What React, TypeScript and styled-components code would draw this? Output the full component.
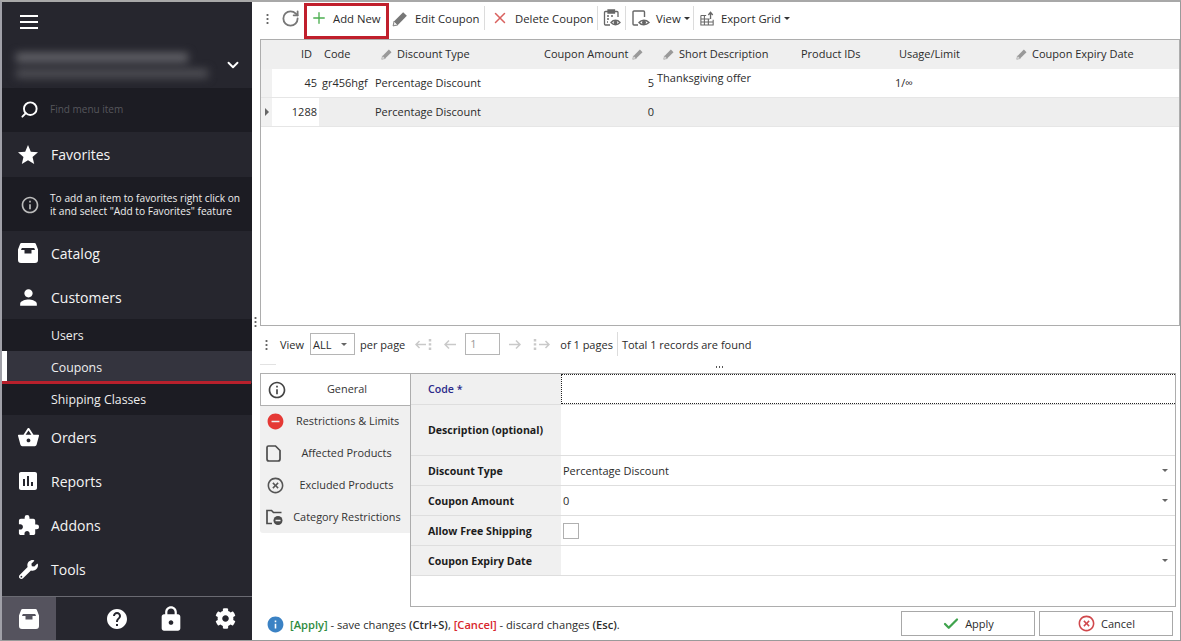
import React from 'react';
import styled, { createGlobalStyle } from 'styled-components';
import { ChevronDown, Search, Plus, X, RotateCw, Check } from 'lucide-react';
import { MdStar, MdInfoOutline, MdPerson, MdAssessment, MdExtension, MdShoppingBasket, MdHelp, MdLock, MdInfo, MdRemoveCircle, MdHighlightOff } from 'react-icons/md';
import { FaWrench, FaCog } from 'react-icons/fa';

const Global = createGlobalStyle`
    html, body { margin: 0; padding: 0; background: #fff; overflow: hidden; }
    * { box-sizing: border-box; }
    body { font-family: "Open Sans", "Liberation Sans", sans-serif; font-size: 11px; color: #2b2b2b; }
`;

const Frame = styled.div`
    width: 1181px;
    height: 641px;
    display: flex;
    border-top: 2px solid #a8a8a8;
    border-left: 2px solid #a0a0a8;
    border-right: 1px solid #9a9a9a;
    border-bottom: 1px solid #9a9a9a;
`;

/* ---------- sidebar ---------- */
const Sidebar = styled.aside`
    width: 250px;
    flex: none;
    height: 100%;
    background: #26262e;
    color: #f2f2f2;
    display: flex;
    flex-direction: column;
    position: relative;
`;
const Burger = styled.div`
    height: 46px;
    padding: 13px 0 0 18px;
    span { display: block; width: 18px; height: 2px; background: #fff; margin-bottom: 4px; }
`;
const Account = styled.div`
    height: 40px;
    display: flex;
    align-items: center;
    justify-content: space-between;
    padding: 0 10px 6px 14px;
`;
const BlurLines = styled.div`
    display: flex;
    flex-direction: column;
    gap: 7px;
    filter: blur(4.5px);
    i { display: block; height: 9px; background: #66666c; }
    i:first-child { width: 172px; }
    i:last-child { width: 192px; background: #505056; }
`;
const SearchRow = styled.div`
    height: 44px;
    background: #1c1c23;
    display: flex;
    align-items: center;
    padding: 0 0 2px 18px;
    gap: 11px;
    font-size: 10px;
    color: #56565c;
    svg { transform: scaleX(-1); color: #fff; }
`;
const MenuItem = styled.div<{ $h?: number }>`
    height: ${p => p.$h || 44}px;
    display: flex;
    align-items: center;
    padding-left: 16px;
    gap: 13px;
    font-size: 14px;
    color: #f4f4f4;
    svg { flex: none; }
`;
const IconSlot = styled.span`
    width: 20px;
    height: 20px;
    display: flex;
    align-items: center;
    justify-content: center;
    flex: none;
`;
const Hint = styled.div`
    height: 54px;
    background: #1c1c23;
    display: flex;
    align-items: center;
    padding: 1px 0 0 18px;
    gap: 10px;
    font-size: 10.2px;
    line-height: 13px;
    color: #eee;
    svg { color: #bbb; flex: none; }
`;
const SubList = styled.div`
    background: #1c1c23;
`;
const SubItem = styled.div<{ $active?: boolean }>`
    height: 32px;
    display: flex;
    align-items: center;
    padding-left: ${p => (p.$active ? 44 : 49)}px;
    font-size: 12.3px;
    color: #eee;
    position: relative;
    background: ${p => (p.$active ? '#34343e' : 'transparent')};
    border-left: ${p => (p.$active ? '5px solid #fff' : '0')};
`;
const RedLine = styled.span`
    position: absolute;
    left: -5px;
    right: 1px;
    bottom: -1px;
    height: 3px;
    background: #b8202c;
`;
const SideFooter = styled.div`
    margin-top: auto;
    height: 44px;
    border-top: 1px solid #6a6a72;
    display: flex;
    align-items: center;
`;
const FooterActive = styled.div`
    width: 54px;
    height: 100%;
    background: #55535e;
    display: flex;
    align-items: center;
    justify-content: center;
    margin-right: 34px;
`;
const FooterBtn = styled.div`
    width: 54px;
    display: flex;
    justify-content: center;
    color: #fff;
`;

/* ---------- main ---------- */
const Main = styled.main`
    flex: 1;
    min-width: 0;
    display: flex;
    flex-direction: column;
    position: relative;
`;
const Toolbar = styled.div`
    height: 37px;
    display: flex;
    align-items: center;
    padding: 0 0 5px 14px;
    font-size: 11.3px;
    color: #2b2b2b;
`;
const Grip = styled.span<{ $mr?: number }>`
    width: 3px;
    height: 11px;
    flex: none;
    margin-right: ${p => p.$mr || 0}px;
    background: radial-gradient(circle, #666 1px, transparent 1.2px) 0 0 / 3px 4px repeat-y;
`;
const SplitterGrip = styled(Grip)`
    position: absolute;
    left: 2px;
    top: 314px;
`;
const ToolBtn = styled.div<{ $w: number; $pl: number }>`
    width: ${p => p.$w}px;
    height: 100%;
    flex: none;
    display: flex;
    align-items: center;
    gap: 6px;
    padding-left: ${p => p.$pl}px;
    white-space: nowrap;
`;
const AddBtn = styled.div`
    width: 85px;
    height: 36px;
    margin-top: 1px;
    flex: none;
    align-self: flex-start;
    display: flex;
    align-items: center;
    gap: 5px;
    padding: 0 0 6px 3px;
    border: 3px solid #c01f2c;
    white-space: nowrap;
`;
const Sep = styled.span<{ $mx?: number }>`
    width: 1px;
    height: 24px;
    flex: none;
    margin: 0 ${p => p.$mx || 0}px;
    background: #dcdcdc;
`;
const Caret = styled.span`
    width: 0;
    height: 0;
    flex: none;
    margin-left: -3px;
    border-left: 3px solid transparent;
    border-right: 3px solid transparent;
    border-top: 3px solid #333;
`;
const GridBox = styled.section`
    margin-left: 8px;
    height: 287px;
    flex: none;
    border: 1px solid #adadad;
    background: #fff;
`;
const cols = '11px 47px 53px 168px 116px 139px 98px 117px 1fr';
const HeadRow = styled.div`
    height: 29px;
    display: grid;
    grid-template-columns: ${cols};
    background: #efefef;
    align-items: center;
    padding-bottom: 2px;
`;
const HeadCell = styled.div<{ $x?: number }>`
    display: flex;
    align-items: center;
    gap: 4px;
    white-space: nowrap;
    padding-left: ${p => p.$x || 0}px;
`;
const Row = styled.div<{ $alt?: boolean }>`
    height: 29px;
    display: grid;
    grid-template-columns: ${cols};
    align-items: center;
    background: ${p => (p.$alt ? '#eeeeee' : '#fff')};
    border-bottom: 1px solid #e6e6e6;
`;
const Indicator = styled.div`
    height: 100%;
    background: #f1f1f1;
    display: flex;
    align-items: center;
    padding-left: 4px;
`;
const RightArrow = styled.span`
    width: 0;
    height: 0;
    border-top: 4px solid transparent;
    border-bottom: 4px solid transparent;
    border-left: 4px solid #666;
`;
const Cell = styled.div<{ $right?: boolean; $white?: boolean; $up?: boolean; $pad?: number }>`
    height: 100%;
    display: flex;
    align-items: ${p => (p.$up ? 'flex-start' : 'center')};
    justify-content: ${p => (p.$right ? 'flex-end' : 'flex-start')};
    padding: ${p => (p.$up ? '1px' : '0')} ${p => (p.$right ? '2px' : '0')} ${p => (p.$up ? '0' : '2px')} ${p => p.$pad || 0}px;
    white-space: nowrap;
    background: ${p => (p.$white ? '#fff' : 'transparent')};
`;
const Pager = styled.div`
    height: 38px;
    padding: 0 0 2px 13px;
    display: flex;
    align-items: center;
    white-space: nowrap;
    position: relative;
`;
const SelectBox = styled.div`
    width: 45px;
    height: 22px;
    margin: 0 5px 0 6px;
    border: 1px solid #b5b5b5;
    display: flex;
    align-items: center;
    justify-content: space-between;
    padding: 0 7px 0 2px;
`;
const SmallCaret = styled.span`
    width: 0;
    height: 0;
    border-left: 3px solid transparent;
    border-right: 3px solid transparent;
    border-top: 3px solid #666;
`;
const PageInput = styled.div`
    width: 35px;
    height: 22px;
    border: 1px solid #b5b5b5;
    padding: 2px 0 0 4px;
    color: #999;
    margin: 0 8px 0 8px;
`;
const PagerIcon = styled.span<{ $w: number; $ml: number }>`
    width: ${p => p.$w}px;
    margin-left: ${p => p.$ml}px;
    flex: none;
    display: flex;
    align-items: center;
    justify-content: center;
`;
const PagesLabel = styled.span`
    margin-left: 10px;
`;
const DotsHandle = styled.div`
    height: 9px;
    display: flex;
    justify-content: center;
    align-items: flex-start;
    padding: 2px 0 0 6px;
    position: relative;
    span { width: 9px; height: 2px; background: radial-gradient(circle, #555 1px, transparent 1.1px) 0 0 / 3px 2px repeat-x; }
    &::before { content: ''; position: absolute; left: 8px; top: 0; width: 16px; height: 1px; background: #e2e2e2; }
`;
const Editor = styled.div`
    display: flex;
    flex: none;
    margin-left: 8px;
`;
const Tabs = styled.nav`
    width: 150px;
    height: 160px;
    flex: none;
    background: #f0f0f0;
    border-radius: 0 0 0 3px;
    display: flex;
    flex-direction: column;
`;
const Tab = styled.div<{ $active?: boolean; $narrow?: boolean }>`
    height: ${p => (p.$active ? 33 : 32)}px;
    flex: none;
    display: grid;
    grid-template-columns: ${p => (p.$narrow ? '25px' : '30px')} 1fr;
    align-items: center;
    padding: 0 ${p => (p.$narrow ? 7 : 13)}px 0 6px;
    font-size: 10.9px;
    white-space: nowrap;
    text-align: center;
    color: #333;
    span { position: relative; top: -1px; }
    ${p => (p.$active ? 'background:#fff;border:1px solid #b0b0b0;border-right:0;margin-bottom:-1px;' : '')}
`;
const FormPanel = styled.div`
    width: 766px;
    height: 234px;
    border: 1px solid #adadad;
    flex: none;
    background: #fff;
`;
const FormRow = styled.div<{ $h?: number }>`
    height: ${p => p.$h || 30}px;
    display: grid;
    grid-template-columns: 150px 1fr;
    border-bottom: 1px solid #dedede;
`;
const FormLabel = styled.div<{ $code?: boolean }>`
    background: #f0f0f0;
    display: flex;
    align-items: center;
    padding-left: 17px;
    font-weight: ${p => (p.$code ? 600 : 700)};
    font-size: 10.6px;
    color: ${p => (p.$code ? '#2b2a8a' : '#1c1c1c')};
`;
const FormValue = styled.div<{ $focus?: boolean }>`
    display: flex;
    align-items: center;
    justify-content: space-between;
    padding: 0 7px 0 2px;
    ${p => (p.$focus ? 'border: 1px dotted #222; border-right: 0;' : '')}
`;
const CheckBox = styled.span`
    width: 16px;
    height: 16px;
    border: 1px solid #b0b0b0;
`;
const Bottom = styled.div`
    flex: 1;
    display: flex;
    align-items: center;
    padding: 0 7px 0 14px;
    font-size: 11.15px;
`;
const Message = styled.div`
    display: flex;
    align-items: center;
    gap: 5px;
    padding-top: 2px;
    white-space: pre;
    b { font-weight: 600; }
    .ok { color: #2e8b3d; font-weight: 600; }
    .no { color: #d8262c; font-weight: 600; }
`;
const Buttons = styled.div`
    margin-left: auto;
    display: flex;
    gap: 4px;
`;
const Button = styled.div`
    width: 134px;
    height: 25px;
    border: 1px solid #a8a8a8;
    display: flex;
    align-items: center;
    justify-content: center;
    gap: 5px;
    font-size: 11px;
`;

const Archive = ({ size = 20 }: { size?: number }) => (
    <svg width={size} height={size} viewBox="0 0 20 20" fill="#fff">
        <path fillRule="evenodd" d="M3.500 0h13a1.500 1.500 0 0 1 1.400 1L20 6.500V17a3 3 0 0 1-3 3H3a3 3 0 0 1-3-3V6.500L2.100 1a1.500 1.500 0 0 1 1.400-1zM3.800 5 3 7h3.500v3.500h7V7H17l-.800-2z" />
    </svg>
);

const Pencil = ({ size = 12, c = '#999' }: { size?: number; c?: string }) => (
    <svg width={size} height={size} viewBox="0 0 16 16">
        <path d="M1 15l1-4.500L10.500 2l3.500 3.500L5.500 14z" fill={c} />
        <path d="M1 15l1-4.500 3.500 3.500z" fill="#eee" stroke={c} strokeWidth=".8" />
    </svg>
);

const ClipboardEye = () => (
    <svg width="18" height="18" viewBox="0 0 18 18" fill="none" stroke="#666" strokeWidth="1.300">
        <path d="M7 16H2.500A1 1 0 0 1 1.500 15V3.500a1 1 0 0 1 1-1H14a1 1 0 0 1 1 1V8" />
        <path d="M5 1h6.500v3H5z" fill="#666" />
        <path d="M4 7h2M8 7h2M4 10h2M4 13h1" />
        <path d="M8 13.500c2.500-3 6.500-3 9 0-2.500 3-6.500 3-9 0z" />
        <circle cx="12.500" cy="13.500" r="1.200" fill="#666" />
    </svg>
);

const PageEye = () => (
    <svg width="18" height="17" viewBox="0 0 18 17" fill="none" stroke="#666" strokeWidth="1.400">
        <path d="M6 15H2a1 1 0 0 1-1-1V2a1 1 0 0 1 1-1h9.500a1 1 0 0 1 1 1v5" />
        <path d="M7 12.500c2.500-3 7-3 10 0-3 3-7.500 3-10 0z" />
        <circle cx="12" cy="12.500" r="1.300" fill="#666" />
    </svg>
);

const ExportIcon = () => (
    <svg width="17" height="17" viewBox="0 0 17 17" fill="none" stroke="#666" strokeWidth="1.200">
        <path d="M1 5h6M1 5v11h14v-6M1 9h10M1 12.500h14M5 5v11M9.500 9v7" />
        <path d="M12 9V2M9.500 4.500 12 1.500l2.500 3" strokeWidth="1.500" />
    </svg>
);

const ArrowSvg = styled.svg<{ $flip?: boolean }>`
    transform: ${p => (p.$flip ? 'scaleX(-1)' : 'none')};
`;

const Arrow = ({ flip, bars }: { flip?: boolean; bars?: boolean }) => (
    <ArrowSvg $flip={flip} width={bars ? 17 : 13} height="13" viewBox={bars ? '0 0 17 13' : '0 0 13 13'} fill="none" stroke="#c9c9c9" strokeWidth="1.500">
        {bars ? (
            <>
                <path d="M6 6.500h10M12.500 3l3.500 3.500-3.500 3.500" />
                <path d="M2 1v2.500M2 5.200v2.500M2 9.500V12" strokeWidth="2.500" strokeDasharray="2.400 2" />
            </>
        ) : (
            <path d="M1 6.500h11M8 2.500l4 4-4 4" />
        )}
    </ArrowSvg>
);

const PageIcon = () => (
    <svg width="15" height="17" viewBox="0 0 15 17" fill="none" stroke="#4c4c4c" strokeWidth="1.700">
        <path d="M2.500 1H9.500L14 5.500V14a2 2 0 0 1-2 2H3a2 2 0 0 1-2-2V2.500A1.500 1.500 0 0 1 2.500 1z" />
    </svg>
);

const FolderMinus = () => (
    <svg width="17" height="16" viewBox="0 0 17 16" fill="none" stroke="#4c4c4c" strokeWidth="1.700">
        <path d="M6 14.500H1V1.500h4.500l2 2h8" />
        <circle cx="12" cy="11.500" r="4.500" fill="#4c4c4c" stroke="none" />
        <path d="M9.500 11.500h5" stroke="#f0f0f0" strokeWidth="1.500" />
    </svg>
);

const App = () => {
    return (
        <>
            <Global />
            <Frame>
                <Sidebar>
                    <Burger><span /><span /><span /></Burger>
                    <Account>
                        <BlurLines><i /><i /></BlurLines>
                        <ChevronDown size={18} color="#fff" strokeWidth={2.5} />
                    </Account>
                    <SearchRow>
                        <Search size={19} strokeWidth={2.4} />
                        Find menu item
                    </SearchRow>
                    <MenuItem $h={45}><IconSlot><MdStar size={24} color="#fff" /></IconSlot>Favorites</MenuItem>
                    <Hint>
                        <MdInfoOutline size={20} />
                        <span>To add an item to favorites right click on<br />it and select "Add to Favorites" feature</span>
                    </Hint>
                    <MenuItem><IconSlot><Archive /></IconSlot>Catalog</MenuItem>
                    <MenuItem><IconSlot><MdPerson size={25} color="#fff" /></IconSlot>Customers</MenuItem>
                    <SubList>
                        <SubItem>Users</SubItem>
                        <SubItem $active>Coupons<RedLine /></SubItem>
                        <SubItem>Shipping Classes</SubItem>
                    </SubList>
                    <MenuItem><IconSlot><MdShoppingBasket size={23} color="#fff" /></IconSlot>Orders</MenuItem>
                    <MenuItem><IconSlot><MdAssessment size={24} color="#fff" /></IconSlot>Reports</MenuItem>
                    <MenuItem><IconSlot><MdExtension size={23} color="#fff" /></IconSlot>Addons</MenuItem>
                    <MenuItem><IconSlot><FaWrench size={19} color="#fff" /></IconSlot>Tools</MenuItem>
                    <SideFooter>
                        <FooterActive><Archive /></FooterActive>
                        <FooterBtn><MdHelp size={24} /></FooterBtn>
                        <FooterBtn><MdLock size={28} /></FooterBtn>
                        <FooterBtn><FaCog size={21} /></FooterBtn>
                    </SideFooter>
                </Sidebar>
                <Main>
                    <SplitterGrip />
                    <Toolbar>
                        <Grip />
                        <ToolBtn $w={35} $pl={12}><RotateCw size={19} color="#777" strokeWidth={2.3} /></ToolBtn>
                        <AddBtn><Plus size={18} color="#4caf50" strokeWidth={1.8} />Add New</AddBtn>
                        <ToolBtn $w={95} $pl={3}><Pencil size={17} c="#777" />Edit Coupon</ToolBtn>
                        <Sep />
                        <ToolBtn $w={112} $pl={6}><X size={18} color="#d9615f" strokeWidth={2} />Delete Coupon</ToolBtn>
                        <Sep />
                        <ToolBtn $w={27} $pl={5}><ClipboardEye /></ToolBtn>
                        <Sep />
                        <ToolBtn $w={67} $pl={6}><PageEye />View<Caret /></ToolBtn>
                        <Sep />
                        <ToolBtn $w={96} $pl={6}><ExportIcon />Export Grid<Caret /></ToolBtn>
                    </Toolbar>
                    <GridBox>
                        <HeadRow>
                            <span />
                            <HeadCell $x={29}>ID</HeadCell>
                            <HeadCell $x={5}>Code</HeadCell>
                            <HeadCell $x={9}><Pencil />Discount Type</HeadCell>
                            <HeadCell $x={4}>Coupon Amount<Pencil /></HeadCell>
                            <HeadCell $x={7}><Pencil />Short Description</HeadCell>
                            <HeadCell $x={6}>Product IDs</HeadCell>
                            <HeadCell $x={6}>Usage/Limit</HeadCell>
                            <HeadCell $x={6}><Pencil />Coupon Expiry Date</HeadCell>
                        </HeadRow>
                        <Row>
                            <Indicator />
                            <Cell $right>45</Cell>
                            <Cell $pad={3}>gr456hgf</Cell>
                            <Cell $pad={3}>Percentage Discount</Cell>
                            <Cell $right>5</Cell>
                            <Cell $up $pad={1}>Thanksgiving offer</Cell>
                            <Cell />
                            <Cell $pad={2}>1/∞</Cell>
                            <Cell />
                        </Row>
                        <Row $alt>
                            <Indicator><RightArrow /></Indicator>
                            <Cell $right $white>1288</Cell>
                            <Cell />
                            <Cell $pad={3}>Percentage Discount</Cell>
                            <Cell $right>0</Cell>
                            <Cell />
                            <Cell />
                            <Cell />
                            <Cell />
                        </Row>
                    </GridBox>
                    <Pager>
                        <Grip $mr={12} />
                        View
                        <SelectBox>ALL<SmallCaret /></SelectBox>
                        per page
                        <PagerIcon $w={17} $ml={10}><Arrow flip bars /></PagerIcon>
                        <PagerIcon $w={13} $ml={12}><Arrow flip /></PagerIcon>
                        <PageInput>1</PageInput>
                        <PagerIcon $w={13} $ml={0}><Arrow /></PagerIcon>
                        <PagerIcon $w={17} $ml={12}><Arrow bars /></PagerIcon>
                        <PagesLabel>of 1 pages</PagesLabel>
                        <Sep $mx={4} />
                        Total 1 records are found
                    </Pager>
                    <DotsHandle><span /></DotsHandle>
                    <Editor>
                        <Tabs>
                            <Tab $active><MdInfoOutline size={20} color="#444" /><span>General</span></Tab>
                            <Tab><MdRemoveCircle size={19} color="#e53935" /><span>Restrictions &amp; Limits</span></Tab>
                            <Tab><PageIcon /><span>Affected Products</span></Tab>
                            <Tab><MdHighlightOff size={19} color="#555" /><span>Excluded Products</span></Tab>
                            <Tab $narrow><FolderMinus /><span>Category Restrictions</span></Tab>
                        </Tabs>
                        <FormPanel>
                            <FormRow $h={31}><FormLabel $code>Code *</FormLabel><FormValue $focus /></FormRow>
                            <FormRow $h={51}><FormLabel>Description (optional)</FormLabel><FormValue /></FormRow>
                            <FormRow><FormLabel>Discount Type</FormLabel><FormValue>Percentage Discount<SmallCaret /></FormValue></FormRow>
                            <FormRow><FormLabel>Coupon Amount</FormLabel><FormValue>0<SmallCaret /></FormValue></FormRow>
                            <FormRow><FormLabel>Allow Free Shipping</FormLabel><FormValue><CheckBox /></FormValue></FormRow>
                            <FormRow><FormLabel>Coupon Expiry Date</FormLabel><FormValue><span /><SmallCaret /></FormValue></FormRow>
                        </FormPanel>
                    </Editor>
                    <Bottom>
                        <Message>
                            <MdInfo size={19} color="#3b82c4" />
                            <span><span className="ok">[Apply]</span> - save changes <b>(Ctrl+S)</b>, <span className="no">[Cancel]</span> - discard changes <b>(Esc)</b>.</span>
                        </Message>
                        <Buttons>
                            <Button><Check size={18} color="#3fa34d" strokeWidth={3} />Apply</Button>
                            <Button><MdHighlightOff size={19} color="#d0484c" />Cancel</Button>
                        </Buttons>
                    </Bottom>
                </Main>
            </Frame>
        </>
    );
};

export default App;
